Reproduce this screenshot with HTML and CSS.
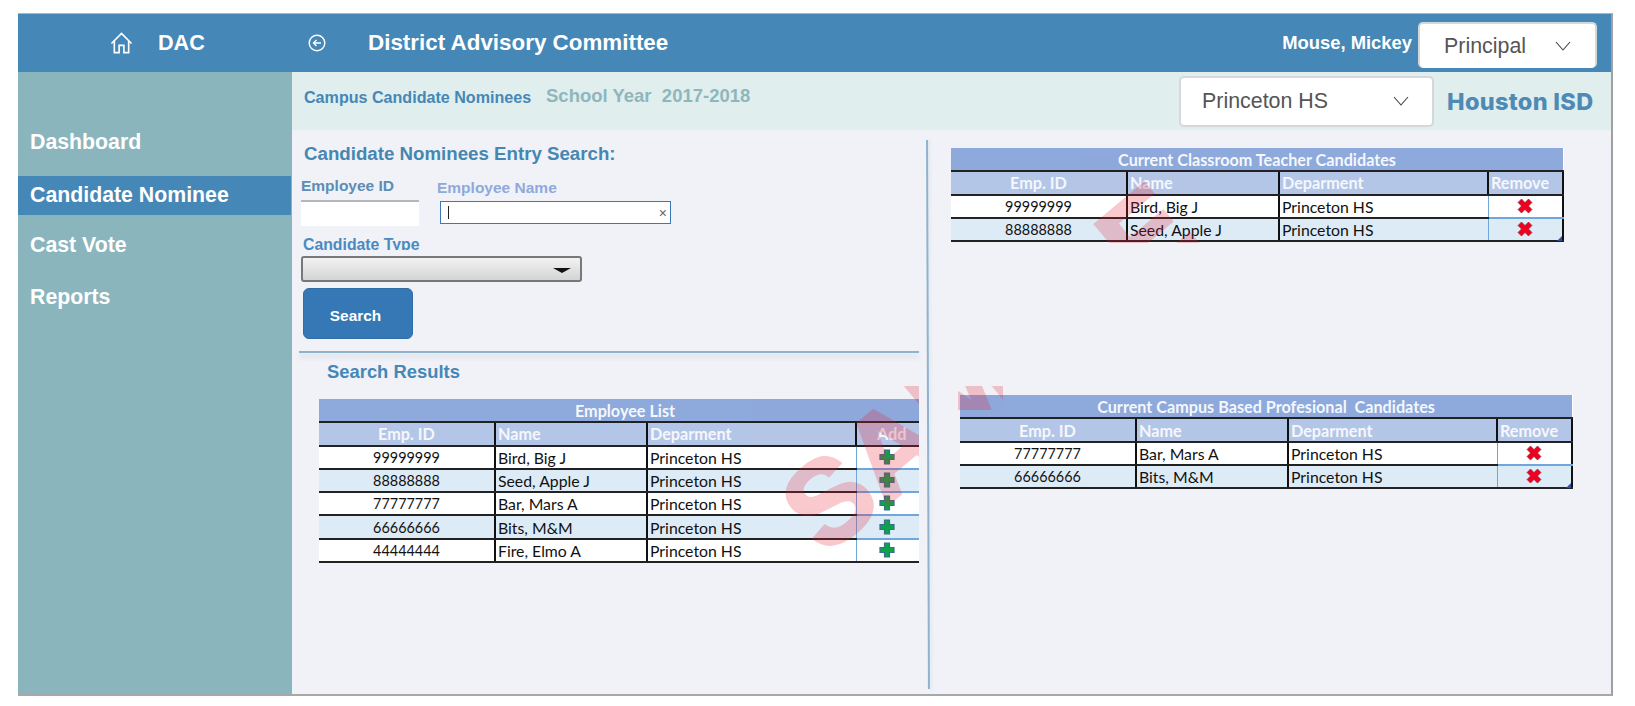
FILE: index.html
```html
<!DOCTYPE html>
<html lang="en">
<head>
    <meta charset="UTF-8">
    <meta name="viewport" content="width=device-width, initial-scale=1.0">
    <title>District Advisory Committee</title>
    <link rel="stylesheet" href="styles.css">
</head>
<body>
    <div class="frame">
        <header class="topbar">
            <div class="brand">
                <svg class="home-icon" viewBox="0 0 24 23" fill="none" stroke="#fff" stroke-width="1.7">
                    <path d="M1.5 12 L12 1.5 L22.5 12"/>
                    <path d="M4.5 9.5 V21.5 H9.5 V14 H14.5 V21.5 H19.5 V9.5"/>
                </svg>
                <span class="brand-name">DAC</span>
            </div>
            <svg class="back-icon" viewBox="0 0 18 18" fill="none" stroke="#fff" stroke-width="1.4">
                <circle cx="9" cy="9" r="7.8"/>
                <path d="M13 9 H5.5 M8.5 6 L5.5 9 L8.5 12"/>
            </svg>
            <h1 class="app-title">District Advisory Committee</h1>
            <span class="user-name">Mouse, Mickey</span>
            <div class="dropdown role-select">
                <span>Principal</span>
                <svg class="chevron" viewBox="0 0 16 10" fill="none" stroke="#444" stroke-width="1.1"><path d="M1 1 L8 9 L15 1"/></svg>
            </div>
        </header>

        <div class="below">
            <nav class="sidebar">
                <a class="nav-item">Dashboard</a>
                <a class="nav-item active">Candidate Nominee</a>
                <a class="nav-item">Cast Vote</a>
                <a class="nav-item">Reports</a>
            </nav>

            <div class="page">
                <div class="subheader">
                    <span class="sub-title">Campus Candidate Nominees</span>
                    <span class="school-year">School Year&nbsp; 2017-2018</span>
                    <div class="dropdown campus-select">
                        <span>Princeton HS</span>
                        <svg class="chevron" viewBox="0 0 16 10" fill="none" stroke="#444" stroke-width="1.1"><path d="M1 1 L8 9 L15 1"/></svg>
                    </div>
                    <span class="district">Houston ISD</span>
                </div>

                <div class="content">
                    <section class="left-panel">
                        <h2 class="search-heading">Candidate Nominees Entry Search:</h2>
                        <div class="field-row">
                            <div class="field-id">
                                <label class="label-id">Employee ID</label>
                                <div class="input-id"></div>
                            </div>
                            <div class="field-name">
                                <label class="label-name">Employee Name</label>
                                <div class="input-name"><span class="caret"></span><span class="clear">&times;</span></div>
                            </div>
                        </div>
                        <label class="label-type">Candidate Type</label>
                        <div class="type-select"><span class="type-arrow"></span></div>
                        <button class="search-btn" type="button">Search</button>
                        <div class="section-line"></div>
                        <h3 class="results-heading">Search Results</h3>
                        <div class="table-clip">
                            <table class="grid">
                                <colgroup><col class="c1"><col class="c2"><col class="c3"><col class="c4"></colgroup>
                                <tr class="title-row"><th colspan="4">Employee List</th></tr>
                                <tr class="head-row"><th class="center">Emp. ID</th><th>Name</th><th>Deparment</th><th class="add-head">Add</th></tr>
                                <tr><td class="center">99999999</td><td>Bird, Big J</td><td>Princeton HS</td><td class="action add-cell"><svg class="icon" viewBox="0 0 16 16"><path class="plus" d="M5.5 1 H10.5 V5.5 H15 V10.5 H10.5 V15 H5.5 V10.5 H1 V5.5 H5.5 Z"/></svg></td></tr>
                                <tr class="alt"><td class="center">88888888</td><td>Seed, Apple J</td><td>Princeton HS</td><td class="action add-cell"><svg class="icon" viewBox="0 0 16 16"><path class="plus" d="M5.5 1 H10.5 V5.5 H15 V10.5 H10.5 V15 H5.5 V10.5 H1 V5.5 H5.5 Z"/></svg></td></tr>
                                <tr><td class="center">77777777</td><td>Bar, Mars A</td><td>Princeton HS</td><td class="action add-cell"><svg class="icon" viewBox="0 0 16 16"><path class="plus" d="M5.5 1 H10.5 V5.5 H15 V10.5 H10.5 V15 H5.5 V10.5 H1 V5.5 H5.5 Z"/></svg></td></tr>
                                <tr class="alt"><td class="center">66666666</td><td>Bits, M&amp;M</td><td>Princeton HS</td><td class="action add-cell"><svg class="icon" viewBox="0 0 16 16"><path class="plus" d="M5.5 1 H10.5 V5.5 H15 V10.5 H10.5 V15 H5.5 V10.5 H1 V5.5 H5.5 Z"/></svg></td></tr>
                                <tr><td class="center">44444444</td><td>Fire, Elmo A</td><td>Princeton HS</td><td class="action add-cell"><svg class="icon" viewBox="0 0 16 16"><path class="plus" d="M5.5 1 H10.5 V5.5 H15 V10.5 H10.5 V15 H5.5 V10.5 H1 V5.5 H5.5 Z"/></svg></td></tr>
                            </table>
                        </div>
                    </section>

                    <div class="panel-divider"></div>

                    <section class="right-panel">
                        <div class="table-wrap teachers">
                            <table class="grid boxed">
                                <colgroup><col class="c1"><col class="c2"><col class="c3"><col class="c4"></colgroup>
                                <tr class="title-row"><th colspan="4">Current Classroom Teacher Candidates</th></tr>
                                <tr class="head-row"><th class="center">Emp. ID</th><th>Name</th><th>Deparment</th><th>Remove</th></tr>
                                <tr><td class="center">99999999</td><td>Bird, Big J</td><td>Princeton HS</td><td class="action"><svg class="icon x" viewBox="0 0 16 16"><path class="cross" d="M4.5 1 L8 4.5 L11.5 1 L15 4.5 L11.5 8 L15 11.5 L11.5 15 L8 11.5 L4.5 15 L1 11.5 L4.5 8 L1 4.5 Z"/></svg></td></tr>
                                <tr class="alt"><td class="center">88888888</td><td>Seed, Apple J</td><td>Princeton HS</td><td class="action"><svg class="icon x" viewBox="0 0 16 16"><path class="cross" d="M4.5 1 L8 4.5 L11.5 1 L15 4.5 L11.5 8 L15 11.5 L11.5 15 L8 11.5 L4.5 15 L1 11.5 L4.5 8 L1 4.5 Z"/></svg></td></tr>
                            </table>
                            <span class="corner"></span>
                        </div>
                        <div class="table-wrap campus">
                            <table class="grid boxed">
                                <colgroup><col class="c1"><col class="c2"><col class="c3"><col class="c4"></colgroup>
                                <tr class="title-row"><th colspan="4">Current Campus Based Profesional&nbsp; Candidates</th></tr>
                                <tr class="head-row"><th class="center">Emp. ID</th><th>Name</th><th>Deparment</th><th>Remove</th></tr>
                                <tr><td class="center">77777777</td><td>Bar, Mars A</td><td>Princeton HS</td><td class="action"><svg class="icon x" viewBox="0 0 16 16"><path class="cross" d="M4.5 1 L8 4.5 L11.5 1 L15 4.5 L11.5 8 L15 11.5 L11.5 15 L8 11.5 L4.5 15 L1 11.5 L4.5 8 L1 4.5 Z"/></svg></td></tr>
                                <tr class="alt"><td class="center">66666666</td><td>Bits, M&amp;M</td><td>Princeton HS</td><td class="action"><svg class="icon x" viewBox="0 0 16 16"><path class="cross" d="M4.5 1 L8 4.5 L11.5 1 L15 4.5 L11.5 8 L15 11.5 L11.5 15 L8 11.5 L4.5 15 L1 11.5 L4.5 8 L1 4.5 Z"/></svg></td></tr>
                            </table>
                            <span class="corner"></span>
                        </div>
                    </section>
                </div>
            </div>
        </div>
    </div>

    <!-- watermark, only shows through three windows -->
    <svg class="watermark" width="1635" height="706" viewBox="0 0 1635 706">
        <defs>
            <clipPath id="wmWindows">
                <rect x="300" y="386" width="619" height="250"/>
                <rect x="958" y="386" width="45" height="24"/>
                <rect x="1080" y="150" width="120" height="93"/>
            </clipPath>
        </defs>
        <g clip-path="url(#wmWindows)">
            <text class="wm-text" transform="translate(825 557) rotate(-40)">SAMPLE</text>
        </g>
    </svg>
</body>
</html>
```

FILE: styles.css
```css
body {
    margin: 0;
    background-color: #ffffff;
    font-family: "Liberation Sans", Arial, sans-serif;
}
.frame {
    box-sizing: border-box;
    width: 1595px;
    height: 683px;
    margin: 13px 0 0 18px;
    border-top: 1px solid #b5b5b5;
    border-right: 2px solid #a0a0a0;
    border-bottom: 2px solid #a8a8a8;
    display: flex;
    flex-direction: column;
}

/* top bar */
.topbar {
    height: 58px;
    flex: none;
    display: flex;
    align-items: center;
    background-color: #4587b7;
    color: #ffffff;
}
.brand {
    width: 290px;
    flex: none;
    display: flex;
    align-items: center;
    padding-left: 92px;
    box-sizing: border-box;
}
.home-icon {
    width: 23px;
    height: 22px;
}
.brand-name {
    margin-left: 25px;
    font-size: 21.6px;
    font-weight: bold;
}
.back-icon {
    width: 18px;
    height: 18px;
    margin-top: -1px;
}
.app-title {
    margin: 0 0 0 42px;
    font-size: 22.4px;
    font-weight: bold;
    flex: 1;
}
.user-name {
    font-size: 18.4px;
    font-weight: bold;
    margin-right: 6px;
}
.dropdown {
    box-sizing: border-box;
    display: flex;
    align-items: center;
    justify-content: space-between;
    background-color: #ffffff;
    color: #555555;
    border: 2px solid #d4d8da;
    border-radius: 5px;
    font-size: 21.4px;
}
.role-select {
    width: 179px;
    height: 46px;
    margin: 4px 14px 0 0;
    padding: 0 24px 0 24px;
    border-bottom: none;
}
.campus-select {
    width: 255px;
    height: 51px;
    margin-left: -1px;
    padding: 0 23px 0 21px;
}
.chevron {
    width: 16px;
    height: 10px;
}

/* sidebar */
.below {
    flex: 1;
    display: flex;
    min-height: 0;
}
.sidebar {
    width: 274px;
    flex: none;
    background-color: #8bb5bd;
    padding-top: 54px;
    box-sizing: border-box;
}
.nav-item {
    display: block;
    height: 32px;
    line-height: 32px;
    padding-left: 12px;
    font-size: 21.3px;
    font-weight: bold;
    color: #ffffff;
}
.nav-item.active {
    height: 39px;
    line-height: 39px;
    width: 273px;
    box-sizing: border-box;
    margin-top: 18px;
    padding-left: 12px;
    background-color: #4587b7;
}
.nav-item:nth-child(3) {
    margin-top: 14px;
}
.nav-item:nth-child(4) {
    margin-top: 20px;
}

/* sub header */
.page {
    flex: 1;
    display: flex;
    flex-direction: column;
    min-width: 0;
    background-color: #f0f2f8;
}
.subheader {
    height: 58px;
    flex: none;
    display: flex;
    align-items: center;
    background-color: #e0eeee;
    padding-left: 12px;
}
.sub-title {
    width: 242px;
    margin-top: -8px;
    font-size: 16.1px;
    font-weight: bold;
    color: #4587b7;
}
.school-year {
    width: 634px;
    margin-top: -10px;
    font-size: 18.5px;
    font-weight: bold;
    color: #8fb6bc;
}
.district {
    margin-left: 13px;
    font-family: Inter, "Liberation Sans", sans-serif;
    font-size: 23.5px;
    font-weight: 800;
    letter-spacing: 0.3px;
    color: #4f8ab5;
}

/* left side */
.content {
    flex: 1;
    display: flex;
    min-height: 0;
}
.left-panel {
    width: 635px;
    flex: none;
    box-sizing: border-box;
    padding: 14px 0 0 9px;
}
.search-heading {
    margin: 0 0 0 3px;
    height: 20px;
    line-height: 20px;
    font-size: 18.7px;
    font-weight: bold;
    color: #4587b0;
}
.field-row {
    display: flex;
    margin-top: 14px;
}
.field-id {
    width: 136px;
}
.label-id {
    display: block;
    height: 18px;
    line-height: 16px;
    font-size: 15.5px;
    font-weight: bold;
    color: #5b8db5;
}
.input-id {
    width: 118px;
    height: 26px;
    margin-top: 4px;
    box-sizing: border-box;
    background-color: #ffffff;
    border-top: 2px solid #b4b6ba;
}
.field-name {
    padding-top: 2px;
}
.label-name {
    display: block;
    height: 18px;
    line-height: 16px;
    font-size: 15.5px;
    font-weight: bold;
    color: #8fa9da;
}
.input-name {
    box-sizing: border-box;
    width: 231px;
    height: 23px;
    margin: 3px 0 0 3px;
    background-color: #ffffff;
    border: 1px solid #3b78b8;
    display: flex;
    align-items: center;
    justify-content: space-between;
    padding: 0 3px 0 7px;
}
.caret {
    width: 1px;
    height: 13px;
    background-color: #222222;
}
.clear {
    font-size: 14px;
    color: #666666;
}
.label-type {
    display: block;
    height: 12px;
    line-height: 13px;
    margin: 12px 0 0 2px;
    overflow: hidden;
    font-size: 15.8px;
    font-weight: bold;
    color: #4a8ac0;
}
.type-select {
    box-sizing: border-box;
    position: relative;
    width: 281px;
    height: 26px;
    margin-top: 6px;
    border: 2px solid #77787a;
    border-radius: 3px;
    background: linear-gradient(#f2f2f2, #d4d4d4);
}
.type-arrow {
    position: absolute;
    right: 9px;
    top: 10px;
    border-left: 9px solid transparent;
    border-right: 9px solid transparent;
    border-top: 5px solid #111111;
}
.search-btn {
    display: block;
    width: 110px;
    height: 51px;
    margin: 6px 0 0 2px;
    background-color: #3578b5;
    border: 1px solid #2f6da6;
    border-radius: 6px;
    color: #ffffff;
    font-family: "Liberation Sans", Arial, sans-serif;
    font-size: 15.4px;
    font-weight: bold;
    padding: 5px 5px 0 0;
}
.section-line {
    width: 620px;
    height: 2px;
    margin: 12px 0 0 -2px;
    background-color: #8cb4cf;
    box-shadow: 0 4px 5px #d2d4db;
}
.results-heading {
    margin: 9px 0 0 26px;
    height: 20px;
    line-height: 20px;
    font-size: 18.4px;
    font-weight: bold;
    color: #4587b7;
}
.table-clip {
    width: 600px;
    margin: 17px 0 0 18px;
    overflow: hidden;
}

/* tables */
.grid {
    width: 612px;
    table-layout: fixed;
    border-collapse: collapse;
    font-family: Lato, "Liberation Sans", sans-serif;
    font-size: 15.8px;
    color: #111111;
    background-color: #ffffff;
}
.c1 { width: 176px; }
.c2 { width: 152px; }
.c3 { width: 209px; }
.c4 { width: 75px; }
.grid tr {
    height: 23.3px;
}
.grid th,
.grid td {
    padding: 1px 0 0 2px;
    text-align: left;
    border-bottom: 2px solid #222222;
    border-left: 2px solid #111111;
    white-space: nowrap;
    overflow: hidden;
    line-height: 18px;
}
.grid th:first-child,
.grid td:first-child {
    border-left: none;
}
.grid th {
    color: #f4f7fc;
    font-size: 16.2px;
    font-weight: bold;
    background-color: #b4c6e7;
}
.grid .title-row th {
    height: 21px;
    text-align: center;
    background-color: #8ea9db;
    border-left: none;
    padding: 1px 0 0;
}
.grid .center {
    text-align: center;
    padding: 1px 0 0;
}
.grid td.center {
    font-size: 14.4px;
}
.grid .alt td {
    background-color: #ddebf7;
}
.grid .action {
    text-align: center;
    padding: 0;
    border-left: 1px solid #6ea6dd;
    border-bottom-color: #6ea6dd;
}
.grid tr:last-child .action {
    border-bottom-color: #222222;
}
.grid .add-cell {
    padding-right: 14px;
}
.grid .add-head {
    padding-left: 20px;
}
.boxed th:last-child,
.boxed td:last-child {
    border-right: 2px solid #111111;
}
.boxed .title-row th:last-child {
    border-right: none;
}
.icon {
    display: block;
    width: 16px;
    height: 16px;
    margin: -1px auto 0;
}
.plus {
    fill: #0ca34b;
    stroke: #3d6f8c;
    stroke-width: 1.2;
}
.cross {
    fill: #ee0020;
    stroke: #8c2030;
    stroke-width: 0.6;
}

/* right side */
.panel-divider {
    width: 2px;
    flex: none;
    margin: 10px 0 5px;
    background-color: #8fb3cc;
    box-shadow: 2px 0 3px #e2e6ec;
    transform: rotate(-0.2deg);
}
.right-panel {
    flex: 1;
    padding-top: 18px;
    min-width: 0;
}
.table-wrap {
    position: relative;
    width: 612px;
}
.teachers {
    margin-left: 22px;
}
.campus {
    margin: 153px 0 0 31px;
}
.corner {
    position: absolute;
    right: 1px;
    bottom: 1px;
    border-left: 5px solid transparent;
    border-bottom: 5px solid #2f4fa8;
}

/* watermark */
.watermark {
    position: absolute;
    top: 0;
    left: 0;
    pointer-events: none;
}
.wm-text {
    font-family: "Liberation Sans", Arial, sans-serif;
    font-size: 118px;
    font-weight: bold;
    fill: #e61e32;
    stroke: #e61e32;
    stroke-width: 3px;
    opacity: 0.24;
}
```
